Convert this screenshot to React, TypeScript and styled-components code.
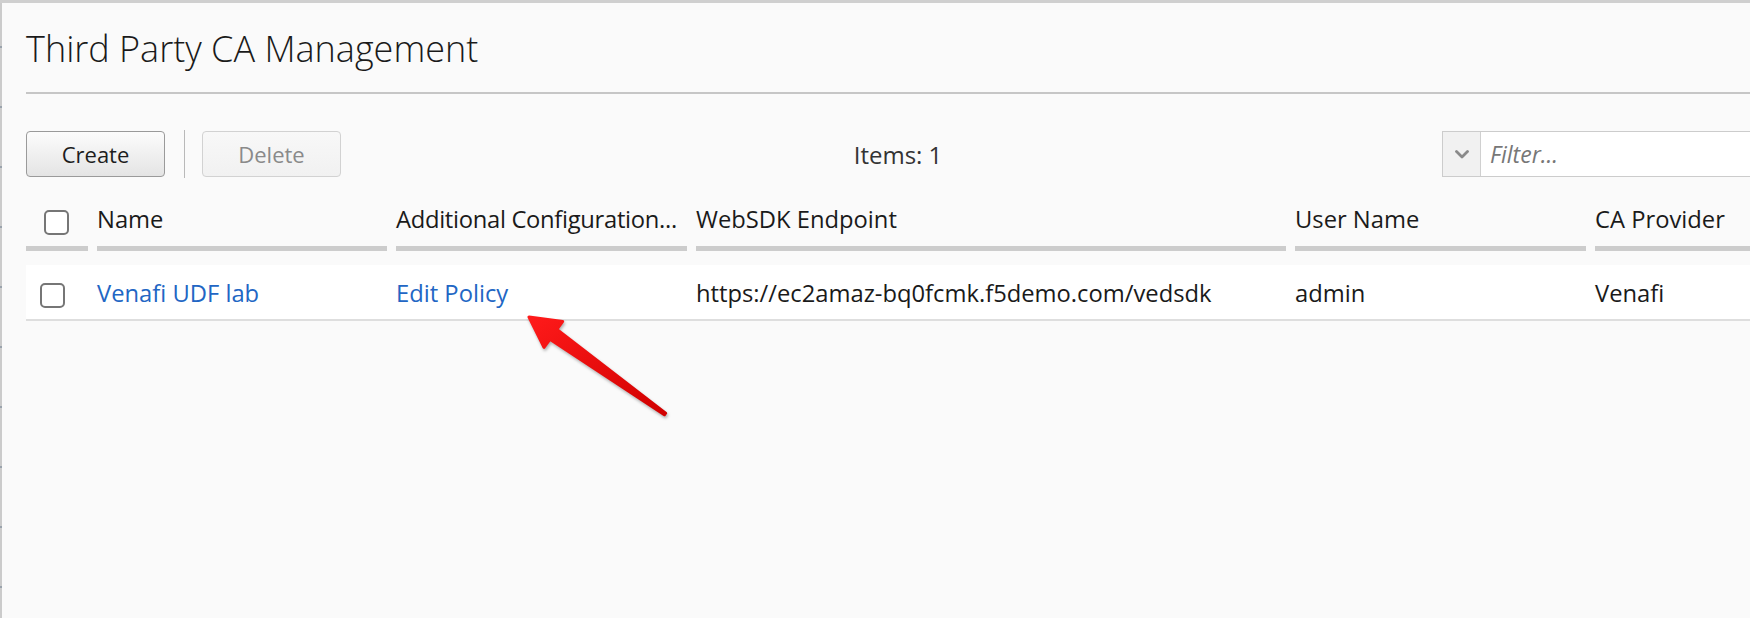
import React from "react";
import styled, { createGlobalStyle } from "styled-components";

const GlobalStyle = createGlobalStyle`
  html, body { margin: 0; padding: 0; background: #fafafa; }
  body { font-family: "Open Sans", "Noto Sans", sans-serif; color: #1f1f1f; }
  * { box-sizing: border-box; }
`;

const Page = styled.div`
  position: relative;
  width: 1750px;
  height: 618px;
  overflow: hidden;
  display: flex;
  flex-direction: column;
  background: #fafafa;
`;

const TopBand = styled.div`
  height: 3px;
  background: #cfcfcf;
  flex: none;
`;

const Body = styled.div`
  flex: 1;
  display: flex;
  min-height: 0;
`;

const Rail = styled.div`
  width: 2px;
  flex: none;
  background: repeating-linear-gradient(
    to bottom,
    #cbcbcb 0 43px,
    #9aa3ac 43px 45px,
    #cbcbcb 45px 60px
  );
`;

const Main = styled.main`
  flex: 1;
  min-width: 0;
  overflow: hidden;
  padding-left: 24px;
`;

const Content = styled.div`
  width: 1740px;
`;

const Title = styled.h1`
  margin: 0;
  padding: 21px 0 18px;
  font-size: 36px;
  line-height: 50px;
  font-weight: 300;
  color: #1a1a1a;
  border-bottom: 2px solid #c6c6c6;
`;

const Toolbar = styled.div`
  margin-top: 36px;
  height: 46px;
  display: grid;
  grid-template-columns: 1fr auto 1fr;
  align-items: center;
`;

const ButtonGroup = styled.div`
  display: flex;
  align-items: center;
  height: 100%;
`;

const Button = styled.button<{ $disabled?: boolean }>`
  width: 139px;
  height: 46px;
  border-radius: 4px;
  font-family: "Open Sans", sans-serif;
  font-size: 22px;
  padding: 0;
  border: 1px solid ${(p) => (p.$disabled ? "#d2d2d2" : "#9a9a9a")};
  color: ${(p) => (p.$disabled ? "#8a8a8a" : "#1d1d1d")};
  background: ${(p) =>
    p.$disabled
      ? "linear-gradient(#f8f8f8, #f1f1f1)"
      : "linear-gradient(#fcfcfc, #e4e4e4)"};
`;

const Separator = styled.div`
  width: 1px;
  height: 48px;
  background: #b9b9b9;
  margin: 0 17px 0 19px;
`;

const Items = styled.div`
  font-size: 24px;
  color: #333;
  margin-left: 4px;
`;

const Filter = styled.div`
  justify-self: end;
  width: 324px;
  height: 46px;
  display: flex;
  border: 1px solid #cccccc;
  border-right: none;
  background: #fff;
`;

const FilterToggle = styled.div`
  width: 38px;
  flex: none;
  background: #f1f1f1;
  border-right: 1px solid #d0d0d0;
  display: flex;
  align-items: center;
  justify-content: center;
`;

const FilterInput = styled.div`
  flex: 1;
  padding-left: 9px;
  display: flex;
  align-items: center;
  font-size: 23px;
  font-style: italic;
  color: #777;
`;

const Table = styled.div`
  margin-top: 27px;
`;

const cols = "71px 299px 300px 599px 300px 300px";

const HeaderRow = styled.div`
  display: grid;
  grid-template-columns: ${cols};
`;

const HeaderCell = styled.div<{ $pad?: number; $tight?: boolean }>`
  margin-right: 9px;
  padding-left: ${(p) => p.$pad ?? 0}px;
  padding-bottom: 11px;
  border-bottom: 5px solid #cccccc;
  display: flex;
  align-items: flex-end;
  height: 48px;
  font-size: 23.75px;
  line-height: 31px;
  letter-spacing: ${(p) => (p.$tight ? "-0.3px" : "0")};
  color: #1a1a1a;
  white-space: nowrap;
`;

const Row = styled.div`
  margin-top: 14px;
  display: grid;
  grid-template-columns: ${cols};
  height: 56px;
  padding-top: 2px;
  background: #fff;
  border-bottom: 2px solid #dedede;
`;

const Cell = styled.div<{ $pad?: number }>`
  padding-left: ${(p) => p.$pad ?? 0}px;
  padding-right: 9px;
  display: flex;
  align-items: center;
  font-size: 23.75px;
  color: #1a1a1a;
  white-space: nowrap;
`;

const Link = styled.a`
  color: #2266c4;
  text-decoration: none;
`;

const Checkbox = styled.span<{ $offset?: number }>`
  display: inline-block;
  width: 25px;
  height: 25px;
  border: 2px solid #767676;
  border-radius: 5px;
  background: #fff;
  margin-top: ${(p) => p.$offset ?? 0}px;
`;

const Annotation = styled.svg`
  position: absolute;
  left: 0;
  top: 0;
  pointer-events: none;
  filter: drop-shadow(1px 2px 1.5px rgba(0, 0, 0, 0.3));
`;

const Chevron = () => (
  <svg width="14" height="9" viewBox="0 0 14 9">
    <path d="M1.5 1.5 L7 7 L12.5 1.5" fill="none" stroke="#8a8a8a" strokeWidth="2.8" strokeLinecap="round" strokeLinejoin="round" />
  </svg>
);

export default function App() {
  return (
    <>
      <GlobalStyle />
      <Page>
        <TopBand />
        <Body>
          <Rail />
          <Main>
            <Content>
              <Title>Third Party CA Management</Title>
              <Toolbar>
                <ButtonGroup>
                  <Button>Create</Button>
                  <Separator />
                  <Button $disabled>Delete</Button>
                </ButtonGroup>
                <Items>Items: 1</Items>
                <Filter>
                  <FilterToggle>
                    <Chevron />
                  </FilterToggle>
                  <FilterInput>Filter...</FilterInput>
                </Filter>
              </Toolbar>
              <Table>
                <HeaderRow>
                  <HeaderCell $pad={18}>
                    <Checkbox $offset={0} />
                  </HeaderCell>
                  <HeaderCell>Name</HeaderCell>
                  <HeaderCell $tight>Additional Configuration...</HeaderCell>
                  <HeaderCell>WebSDK Endpoint</HeaderCell>
                  <HeaderCell>User Name</HeaderCell>
                  <HeaderCell>CA Provider</HeaderCell>
                </HeaderRow>
                <Row>
                  <Cell $pad={14}>
                    <Checkbox $offset={4} />
                  </Cell>
                  <Cell>
                    <Link>Venafi UDF lab</Link>
                  </Cell>
                  <Cell>
                    <Link>Edit Policy</Link>
                  </Cell>
                  <Cell>https://ec2amaz-bq0fcmk.f5demo.com/vedsdk</Cell>
                  <Cell>admin</Cell>
                  <Cell>Venafi</Cell>
                </Row>
              </Table>
            </Content>
          </Main>
        </Body>
        <Annotation width="1750" height="618" viewBox="0 0 1750 618">
          <defs>
            <linearGradient id="arrowRed" x1="0" y1="0" x2="1" y2="1">
              <stop offset="0" stopColor="#ff1a1a" />
              <stop offset="1" stopColor="#d00000" />
            </linearGradient>
          </defs>
          <polygon
            points="529,317 562.7,321.4 556.9,329.5 665.6,413.2 664.4,414.8 549.9,339.3 544,347.4"
            fill="url(#arrowRed)"
            stroke="url(#arrowRed)"
            strokeWidth="3"
            strokeLinejoin="round"
          />
        </Annotation>
      </Page>
    </>
  );
}
